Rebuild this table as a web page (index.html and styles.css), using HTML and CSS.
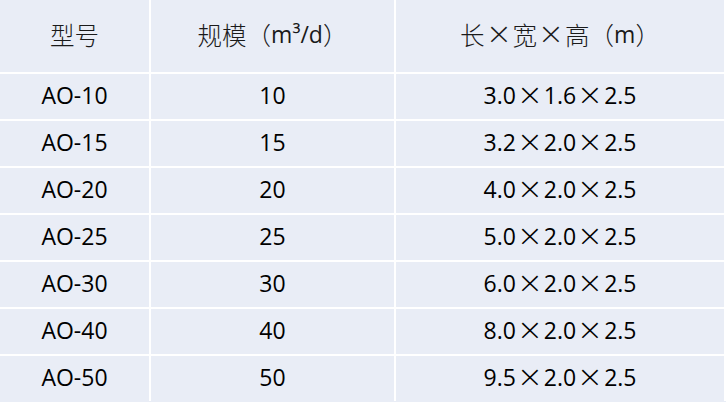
FILE: index.html
```html
<!DOCTYPE html>
<html lang="zh">
<head>
<meta charset="utf-8">
<link rel="stylesheet" href="styles.css">
</head>
<body>
<div class="table">
  <div class="cell head">型号</div>
  <div class="cell head">规模（<span class="lat">m³/d</span>）</div>
  <div class="cell head">长<span class="x">×</span>宽<span class="x">×</span>高（<span class="lat">m</span>）</div>

  <div class="cell">AO-10</div><div class="cell">10</div><div class="cell">3.0<span class="x">×</span>1.6<span class="x">×</span>2.5</div>
  <div class="cell">AO-15</div><div class="cell">15</div><div class="cell">3.2<span class="x">×</span>2.0<span class="x">×</span>2.5</div>
  <div class="cell">AO-20</div><div class="cell">20</div><div class="cell">4.0<span class="x">×</span>2.0<span class="x">×</span>2.5</div>
  <div class="cell">AO-25</div><div class="cell">25</div><div class="cell">5.0<span class="x">×</span>2.0<span class="x">×</span>2.5</div>
  <div class="cell">AO-30</div><div class="cell">30</div><div class="cell">6.0<span class="x">×</span>2.0<span class="x">×</span>2.5</div>
  <div class="cell">AO-40</div><div class="cell">40</div><div class="cell">8.0<span class="x">×</span>2.0<span class="x">×</span>2.5</div>
  <div class="cell">AO-50</div><div class="cell">50</div><div class="cell">9.5<span class="x">×</span>2.0<span class="x">×</span>2.5</div>
</div>
</body>
</html>
```
FILE: styles.css
```css
html, body {
  margin: 0;
  padding: 0;
  background: #e9edf6;
}
.table {
  width: 726px;
  display: grid;
  grid-template-columns: 149px 243px 328px;
  grid-template-rows: 72px repeat(7, 45px);
  gap: 2px;
  padding-right: 2px;
  box-sizing: border-box;
  background: #ffffff;
}
.cell {
  background: #e9edf6;
  display: flex;
  align-items: center;
  justify-content: center;
  font-family: "Open Sans", "Noto Sans CJK SC", sans-serif;
  font-size: 23px;
  color: #000;
  white-space: nowrap;
  padding-bottom: 3px;
}
.head {
  font-family: "Noto Sans CJK SC", sans-serif;
  font-weight: 300;
  font-size: 24.5px;
  color: #1a1a1a;
  padding-bottom: 4px;
}
.lat {
  font-family: "Open Sans", sans-serif;
  font-weight: 400;
  font-size: 23px;
}
.x {
  display: inline-block;
  width: 28px;
  text-align: center;
  font-family: "DejaVu Sans", sans-serif;
  font-weight: 300;
  font-size: 30px;
  line-height: 1;
  transform: scaleX(1.05);
}
```
